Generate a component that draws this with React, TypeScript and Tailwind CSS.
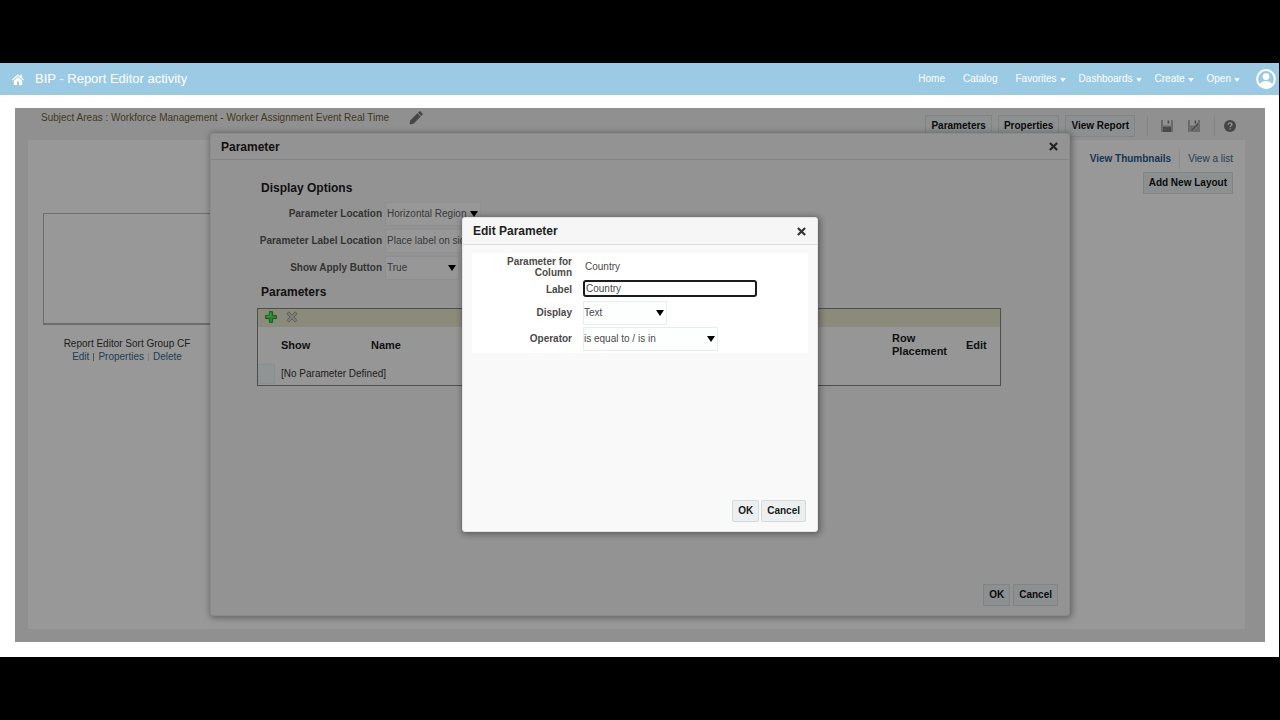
import React from "react";

const navItems = [
  { label: "Home", menu: false },
  { label: "Catalog", menu: false },
  { label: "Favorites", menu: true },
  { label: "Dashboards", menu: true },
  { label: "Create", menu: true },
  { label: "Open", menu: true },
];

function Caret({ className }: { className: string }) {
  return (
    <svg viewBox="0 0 8 6" className={className} fill="currentColor" aria-hidden="true">
      <path d="M0 0h8L4 6z" />
    </svg>
  );
}

function CloseIcon() {
  return (
    <svg viewBox="0 0 10 10" className="size-[9px]" fill="none" stroke="currentColor" strokeWidth="2.4" aria-hidden="true">
      <path d="M1 1l8 8M9 1L1 9" />
    </svg>
  );
}

function HomeIcon() {
  return (
    <svg viewBox="0 0 12 11" className="h-[11px] w-3" fill="currentColor" aria-hidden="true">
      <path d="M6 0.3L0 5.6l.8.9L6 2l5.2 4.5.8-.9-2-1.8V.8H8.4v1.6z" />
      <path d="M6 3L1.8 6.7V11H5V7.6h2V11h3.200V6.700z" />
    </svg>
  );
}

function UserIcon() {
  return (
    <svg viewBox="0 0 20 20" className="size-5" aria-hidden="true">
      <circle cx="10" cy="10" r="8.900" fill="none" stroke="currentColor" strokeWidth="2" />
      <circle cx="10" cy="7.600" r="3.400" fill="currentColor" />
      <path d="M3.600 15.400c1.400-2.500 4-3.400 6.400-3.400s5 .9 6.400 3.400c-1.600 2-4 3-6.400 3s-4.800-1-6.400-3z" fill="currentColor" />
    </svg>
  );
}

function PencilIcon() {
  return (
    <svg viewBox="0 0 14 14" className="size-[14px]" fill="currentColor" aria-hidden="true">
      <path d="M.6 13.400l.6-3.900L8.400 2.300l3.300 3.300-7.200 7.200z" />
      <path d="M9 1.700l.9-.9c.6-.6 1.300-.6 1.900 0l1.400 1.400c.6.600.6 1.300 0 1.900l-.9.900z" />
    </svg>
  );
}

function SaveIcon({ edit }: { edit?: boolean }) {
  return (
    <svg viewBox="0 0 12 12" className="size-3" fill="currentColor" aria-hidden="true">
      <path d="M0 0h2v5.500h8V0h2v12H0z" fillOpacity="0.55" />
      {!edit && <path d="M2 7h8v5H2z" />}
      <path d="M6.600.6h1.600v3H6.600z" />
      {edit && <path d="M2.500 11.500l.5-2L9.800 2.600l1.600 1.600-6.800 6.900z" stroke="#8f8f8f" strokeWidth="0.6" />}
    </svg>
  );
}

function HelpIcon() {
  return (
    <svg viewBox="0 0 12 12" className="size-3" aria-hidden="true">
      <circle cx="6" cy="6" r="6" fill="currentColor" />
      <path d="M4.200 4.700c0-1.200.8-1.800 1.800-1.800s1.900.6 1.900 1.600c0 1.300-1.800 1.300-1.800 2.700" fill="none" stroke="#989898" strokeWidth="1.200" />
      <path d="M5.400 8.200h1.300v1.300H5.400z" fill="#989898" />
    </svg>
  );
}

function AddIcon() {
  return (
    <svg viewBox="0 0 12 12" className="size-3" aria-hidden="true">
      <path d="M4.400.6h3.200v3.800h3.800v3.200H7.600v3.800H4.400V7.600H.6V4.400h3.800z" fill="#228a28" stroke="#17561b" strokeWidth="0.9" />
      <path d="M5.300 1.600v3.700H1.600" fill="none" stroke="#46a34a" strokeWidth="0.8" />
    </svg>
  );
}

function RemoveIcon() {
  return (
    <svg viewBox="0 0 12 12" className="size-3" aria-hidden="true">
      <path d="M2.800.8L6 4 9.200.8l2 2L8 6l3.200 3.200-2 2L6 8l-3.200 3.200-2-2L4 6 .8 2.800z" fill="#7d7d78" stroke="#5e5e5a" strokeWidth="0.9" />
    </svg>
  );
}

function DimButton({ children }: { children: React.ReactNode }) {
  return (
    <button type="button" className="h-[22px] border border-[#828586] bg-[#8d9091] px-[5px] font-bold text-[#0b0b0b]">
      {children}
    </button>
  );
}

type SelectProps = { id: string; label: string; value: string; width: string; dim?: boolean };

function Select({ id, label, value, width, dim }: SelectProps) {
  return (
    <>
      <label htmlFor={id} className={dim ? "text-right font-bold text-[#333333]" : "text-right font-bold text-[#4a4a4a]"}>
        {label}
      </label>
      <div className={`relative flex items-center ${width}`}>
        <select
          id={id}
          defaultValue={value}
          className={
            dim
              ? "h-6 w-full appearance-none border border-[#8f8f93] bg-[#979798] pl-px text-[#383838]"
              : "h-6 w-full appearance-none border border-[#e8eef0] bg-[#fdfefe] text-[#4a4a4a]"
          }
        >
          <option>{value}</option>
        </select>
        <Caret className="pointer-events-none absolute right-[3px] h-[6px] w-2 text-black" />
      </div>
    </>
  );
}

export default function App() {
  return (
    <div className="flex min-h-screen flex-col bg-black py-[63px] font-['Liberation_Sans',Arial,sans-serif] text-[10px] leading-3">
      <header className="mr-px flex h-8 items-center justify-between bg-[#9bcae5] pr-[3px] pl-3 text-white">
        <div className="flex items-center gap-[11px]">
          <a href="#home" aria-label="Home">
            <HomeIcon />
          </a>
          <h1 className="text-[13px] leading-4">BIP - Report Editor activity</h1>
        </div>
        <div className="flex items-center gap-4">
          <nav className="flex items-center">
            {navItems.map((item) => (
              <a
                key={item.label}
                href={`#${item.label.toLowerCase()}`}
                className={item.menu ? "ml-[13px] flex items-center gap-[3px]" : "mr-[5px] ml-[13px]"}
              >
                {item.label}
                {item.menu && <Caret className="mt-[2px] h-1 w-[6px]" />}
              </a>
            ))}
          </nav>
          <button type="button" aria-label="Account">
            <UserIcon />
          </button>
        </div>
      </header>

      <main className="mr-px flex flex-1 bg-white pt-[13px] pr-[14px] pb-[15px] pl-[15px]">
        <div className="relative flex flex-1 flex-col bg-[#919091]">
          <div className="flex h-8 items-start justify-between pr-[29px] pl-[26px]">
            <div className="flex items-center gap-5 pt-[3px] text-[#41381d]">
              <span>Subject Areas : Workforce Management - Worker Assignment Event Real Time</span>
              <button type="button" aria-label="Edit subject area" className="text-[#454545]">
                <PencilIcon />
              </button>
            </div>
            <div className="flex items-center gap-[6px] pt-[7px]">
              <DimButton>Parameters</DimButton>
              <DimButton>Properties</DimButton>
              <DimButton>View Report</DimButton>
              <div className="ml-[6px] flex h-5 items-center gap-[15px] border-l border-[#858585] pl-[13px] text-[#4a4a4a]">
                <button type="button" aria-label="Save">
                  <SaveIcon />
                </button>
                <button type="button" aria-label="Save as">
                  <SaveIcon edit />
                </button>
              </div>
              <div className="ml-2 flex h-5 items-center border-l border-[#858585] pl-[9px] text-[#454545]">
                <button type="button" aria-label="Help">
                  <HelpIcon />
                </button>
              </div>
            </div>
          </div>

          <section className="mr-5 mb-[13px] ml-[13px] flex flex-1 justify-between bg-[#989898] pr-3 pl-[15px]">
            <div className="flex w-[168px] flex-col items-center pt-[73px]">
              <div className="mb-3 h-[112px] w-full border border-b-2 border-[#6d6d6d]" />
              <p className="leading-[13px] text-[#1c1c1c]">Report Editor Sort Group CF</p>
              <div className="flex items-center gap-1 leading-[13px] text-[#1f3c52]">
                <a href="#edit">Edit</a>
                <span className="h-2 border-l border-[#555555]" />
                <a href="#properties">Properties</a>
                <span className="h-2 border-l border-[#808080]" />
                <a href="#delete">Delete</a>
              </div>
            </div>
            <div className="flex flex-col items-end pt-[9px]">
              <div className="mb-[3px] flex items-center gap-2 text-[#1f3c52]">
                <a href="#thumbnails" className="font-bold text-[#173653]">
                  View Thumbnails
                </a>
                <span className="h-5 border-l border-[#8a8f8f]" />
                <a href="#list">View a list</a>
              </div>
              <DimButton>Add New Layout</DimButton>
            </div>
          </section>

          <div className="absolute inset-0 flex items-start justify-center pt-[25px]">
            <section
              role="dialog"
              aria-label="Parameter"
              className="flex min-h-[483px] w-full max-w-[860px] flex-col rounded-[3px] border border-[#8b8b8b] bg-[#949393] shadow-[1px_1px_6px_1px_rgba(0,0,0,0.35)]"
            >
              <header className="flex h-[26px] items-center justify-between border-b border-[#858585] pr-[11px] pl-[10px]">
                <h2 className="text-xs font-bold text-[#111111]">Parameter</h2>
                <button type="button" aria-label="Close" className="text-[#222222]">
                  <CloseIcon />
                </button>
              </header>
              <div className="flex-1 pr-[68px] pl-[46px] text-[#111111]">
                <h3 className="pt-5 pb-[6px] pl-1 text-xs leading-4 font-bold">Display Options</h3>
                <div className="grid grid-cols-[125px_1fr] items-center gap-x-[3px] gap-y-[3px]">
                  <Select id="location" label="Parameter Location" value="Horizontal Region" width="w-24" dim />
                  <Select id="label-location" label="Parameter Label Location" value="Place label on side" width="w-28" dim />
                  <Select id="apply" label="Show Apply Button" value="True" width="w-[74px]" dim />
                </div>
                <h3 className="pt-1 pb-2 pl-1 text-xs leading-4 font-bold">Parameters</h3>
                <div className="border border-[#4c504c] bg-[#969696]">
                  <div className="flex h-[18px] items-center gap-[9px] bg-[#8b8b7c] pb-[2px] pl-[7px]">
                    <button type="button" aria-label="Add parameter">
                      <AddIcon />
                    </button>
                    <button type="button" aria-label="Remove parameter">
                      <RemoveIcon />
                    </button>
                  </div>
                  <table className="w-full table-fixed text-left">
                    <colgroup>
                      <col className="w-[23px]" />
                      <col className="w-[90px]" />
                      <col />
                      <col className="w-[74px]" />
                      <col className="w-[34px]" />
                    </colgroup>
                    <thead className="text-[11px] leading-[13px]">
                      <tr className="h-9">
                        <td />
                        <th>Show</th>
                        <th>Name</th>
                        <th>Row Placement</th>
                        <th>Edit</th>
                      </tr>
                    </thead>
                    <tbody>
                      <tr className="h-[22px]">
                        <td>
                          <div className="h-5 w-[17px] border border-[#8a9092] bg-[#8f9495]" />
                        </td>
                        <td colSpan={4} className="text-[#1c1c1c]">
                          [No Parameter Defined]
                        </td>
                      </tr>
                    </tbody>
                  </table>
                </div>
              </div>
              <footer className="flex justify-end gap-[3px] pr-[11px] pb-[9px]">
                <DimButton>OK</DimButton>
                <DimButton>Cancel</DimButton>
              </footer>
            </section>
          </div>

          <div className="absolute inset-0 flex items-start justify-center pt-[109px]">
            <section
              role="dialog"
              aria-label="Edit Parameter"
              className="flex min-h-[315px] w-full max-w-[356px] flex-col rounded-[3px] border border-[#e4e4e4] bg-[#f9f9f9] shadow-[1px_1px_6px_1px_rgba(0,0,0,0.4)]"
            >
              <header className="flex h-[27px] items-center justify-between border-b border-[#d9dbdd] bg-[#f6f6f7] pr-[11px] pl-[10px]">
                <h2 className="text-xs font-bold text-[#222222]">Edit Parameter</h2>
                <button type="button" aria-label="Close" className="text-[#333333]">
                  <CloseIcon />
                </button>
              </header>
              <div className="flex-1 px-[9px] pt-2">
                <div className="grid grid-cols-[100px_1fr] items-center gap-x-[11px] gap-y-[2px] bg-white pt-[3px] pb-[2px] text-[#4a4a4a]">
                  <span className="pl-6 text-right leading-[11px] font-bold">Parameter for Column</span>
                  <span className="pl-[2px]">Country</span>
                  <label htmlFor="label" className="text-right font-bold">
                    Label
                  </label>
                  <input
                    id="label"
                    type="text"
                    defaultValue="Country"
                    className="mb-[2px] h-[17px] w-[174px] rounded-[3px] border-2 border-[#1c1c1c] bg-white pl-px outline-none"
                  />
                  <Select id="display" label="Display" value="Text" width="w-[84px]" />
                  <Select id="operator" label="Operator" value="is equal to / is in" width="w-[135px]" />
                </div>
              </div>
              <footer className="flex justify-end gap-[2px] pr-[11px] pb-[9px] font-bold text-[#1a1a1a]">
                <button type="button" className="h-[22px] rounded-[2px] border border-[#d5dadd] bg-[#eceff0] px-[5px]">
                  OK
                </button>
                <button type="button" className="h-[22px] rounded-[2px] border border-[#d5dadd] bg-[#eceff0] px-[5px]">
                  Cancel
                </button>
              </footer>
            </section>
          </div>
        </div>
      </main>
    </div>
  );
}
